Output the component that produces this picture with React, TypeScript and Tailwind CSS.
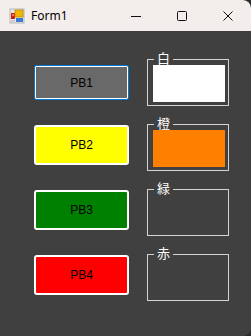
import React from "react";

const buttons = [
  { label: "PB1", bg: "bg-[#696969]", focused: true },
  { label: "PB2", bg: "bg-[#ffff00]", focused: false },
  { label: "PB3", bg: "bg-[#008000]", focused: false },
  { label: "PB4", bg: "bg-[#ff0000]", focused: false },
];

const groups = [
  { label: "白", fill: "bg-white" },
  { label: "橙", fill: "bg-[#ff8000]" },
  { label: "緑", fill: "" },
  { label: "赤", fill: "" },
];

function AppIcon() {
  return (
    <svg width="16" height="16" viewBox="0 0 16 16">
      <rect x="1" y="1" width="14" height="14" fill="#e8e8e8" stroke="#b8b8b8" strokeWidth="1" />
      <rect x="2" y="5" width="4" height="6" fill="#c81e1e" />
      <rect x="3" y="6" width="2" height="2" fill="#ff6a6a" />
      <rect x="6" y="2" width="8" height="7" fill="#f2b705" stroke="#c08a00" strokeWidth="0.8" />
      <rect x="7" y="10" width="7" height="4" fill="#3a7bd5" />
      <rect x="2" y="12" width="4" height="2" fill="#cfcfcf" />
    </svg>
  );
}

function TitleBar() {
  return (
    <div className="flex h-[31px] items-center bg-[#f3eeec] rounded-tr-[8px]">
      <div className="ml-[9px] flex items-center">
        <AppIcon />
      </div>
      <span className="ml-[6px] text-[12px] text-black" style={{ fontFamily: "'Noto Sans', sans-serif" }}>
        Form1
      </span>
      <div className="ml-auto flex h-full items-center">
        <div className="flex w-[46px] justify-center">
          <svg width="10" height="10" viewBox="0 0 10 10">
            <line x1="0" y1="5.5" x2="10" y2="5.5" stroke="#111" strokeWidth="1" />
          </svg>
        </div>
        <div className="flex w-[46px] justify-center">
          <svg width="10" height="10" viewBox="0 0 10 10">
            <rect x="0.5" y="0.5" width="9" height="9" rx="1" fill="none" stroke="#111" strokeWidth="1" />
          </svg>
        </div>
        <div className="flex w-[46px] justify-center">
          <svg width="10" height="10" viewBox="0 0 10 10">
            <path d="M0.5 0.5 L9.5 9.5 M9.5 0.5 L0.5 9.5" stroke="#111" strokeWidth="1" />
          </svg>
        </div>
      </div>
    </div>
  );
}

export default function App() {
  return (
    <div className="w-[251px] h-[336px] bg-[#2b2b2b]">
      <div className="flex h-full w-full flex-col overflow-hidden rounded-tr-[8px] rounded-br-[8px] bg-[#404040]">
        <TitleBar />
        <div className="flex flex-1">
          <div className="ml-[34px] mt-[34px] flex w-[95px] flex-col gap-[25px]">
            {buttons.map((b) =>
              b.focused ? (
                <div key={b.label} className="h-[35px] rounded-[2px] border border-[#0078d4]">
                  <div
                    className={`flex h-full items-center justify-center rounded-[1px] border border-white ${b.bg} text-[12px] text-black`}
                    style={{ fontFamily: "'Liberation Sans', sans-serif" }}
                  >
                    {b.label}
                  </div>
                </div>
              ) : (
                <div
                  key={b.label}
                  className={`flex h-[40px] items-center justify-center rounded-[3px] border-2 border-white ${b.bg} text-[12px] text-black`}
                  style={{ fontFamily: "'Liberation Sans', sans-serif" }}
                >
                  {b.label}
                </div>
              )
            )}
          </div>
          <div className="ml-[18px] mt-[28px] flex w-[82px] flex-col gap-[18px]">
            {groups.map((g) => (
              <div key={g.label} className="relative h-[47px] border border-[#d4d4d4]">
                <span
                  className="absolute left-[6px] top-[-9px] bg-[#404040] px-[3px] text-[13px] leading-[13px] text-white"
                  style={{ fontFamily: "'Noto Sans CJK JP', sans-serif" }}
                >
                  {g.label}
                </span>
                {g.fill && <div className={`ml-[5px] mt-[5px] h-[37px] w-[72px] ${g.fill}`} />}
              </div>
            ))}
          </div>
        </div>
      </div>
    </div>
  );
}
